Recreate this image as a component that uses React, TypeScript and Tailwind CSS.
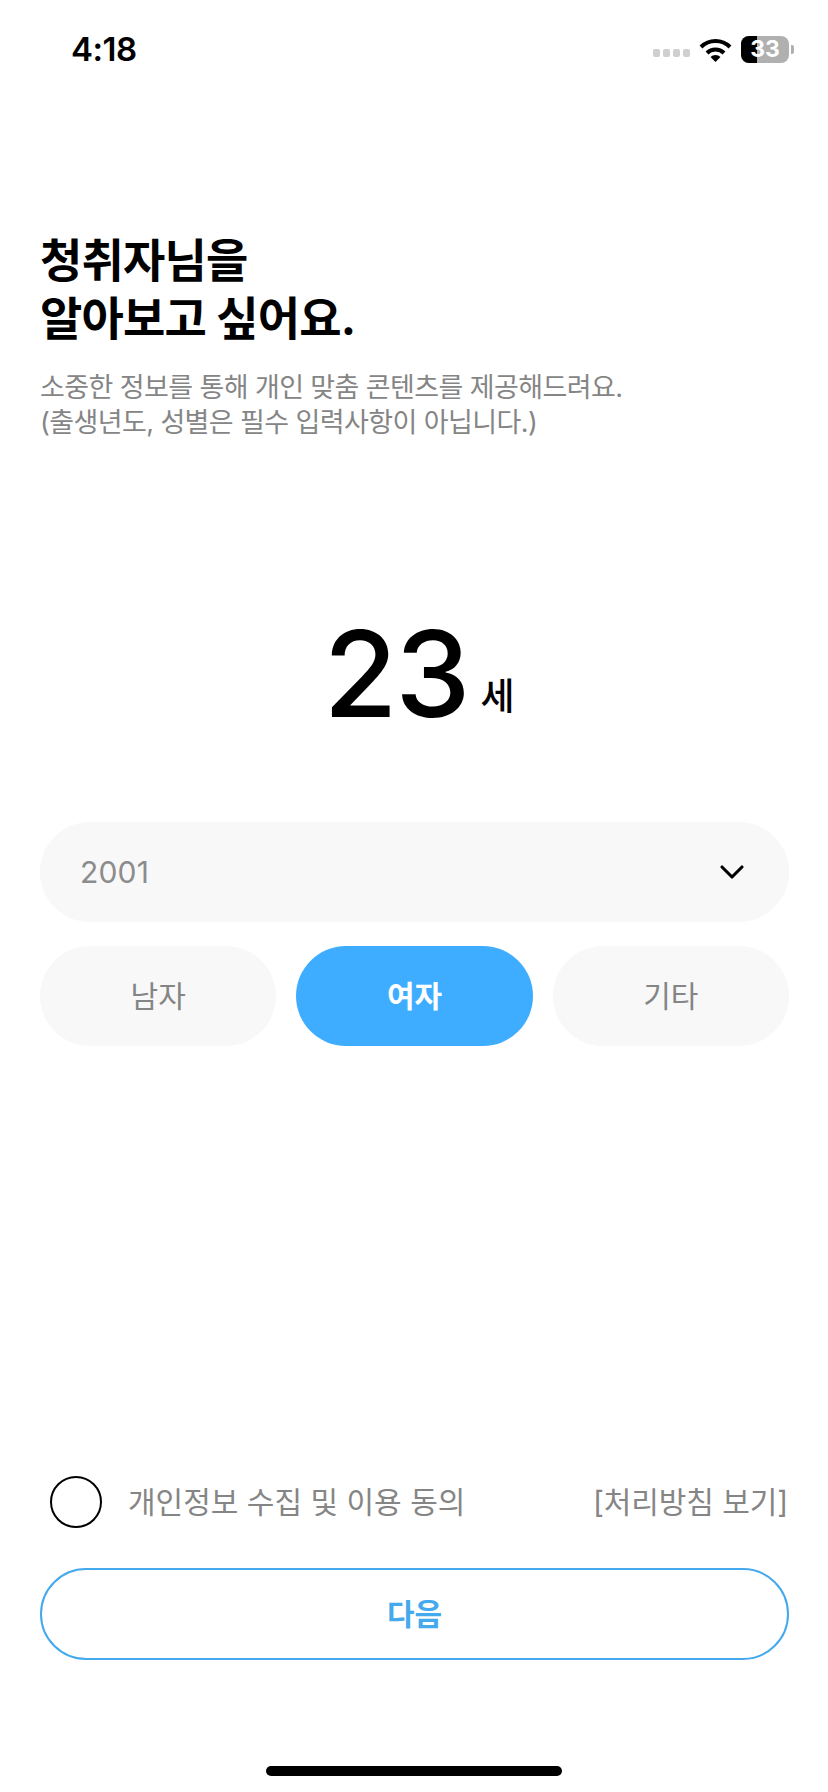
import React from 'react';
import { ChevronDown } from 'lucide-react';

function StatusBar() {
  return (
    <div className="flex h-[86px] shrink-0 items-start justify-between pl-[71px] pr-[34px] pt-[35px]">
      <span className="text-[33px] font-semibold leading-[28px] tracking-[-0.5px] text-black">4:18</span>
      <div className="mt-[1px] flex items-center">
        <div className="mt-[7px] flex gap-[2.5px]">
          {[0, 1, 2, 3].map((i) => (
            <div key={i} className="h-[8px] w-[7.5px] rounded-[2px] bg-[#cfcfcf]" />
          ))}
        </div>
        <svg className="ml-[9px]" width="33" height="24" viewBox="0 0 33 24">
          <path d="M2 9 A20.5 20.5 0 0 1 31 9" fill="none" stroke="#000" strokeWidth="4" />
          <path d="M8 15 A12 12 0 0 1 25 15" fill="none" stroke="#000" strokeWidth="4" />
          <path d="M16.5 24 L11.5 19 A7 7 0 0 1 21.5 19 Z" fill="#000" />
        </svg>
        <div className="relative ml-[9px] flex h-[27px] w-[48px] items-center justify-center overflow-hidden rounded-[8px] bg-[#b0b0b0]">
          <div className="absolute inset-y-0 left-0 w-[16px] bg-black" />
          <span className="relative text-[23px] font-bold leading-none text-white">33</span>
        </div>
        <div className="ml-[2px] h-[9px] w-[3px] rounded-r-[2px] bg-[#b0b0b0]" />
      </div>
    </div>
  );
}

export default function App() {
  const genders = ['남자', '여자', '기타'];

  return (
    <div className="flex h-[1792px] w-[828px] flex-col overflow-hidden bg-white font-['Inter','Noto_Sans_CJK_KR',sans-serif]">
      <StatusBar />

      <div className="flex grow flex-col pl-[40px] pr-[39px]">
        <h1 className="mt-[145px] text-[46px] font-bold leading-[58px] tracking-[-0.8px] text-black">
          청취자님을
          <br />
          알아보고 싶어요.
        </h1>
        <p className="mt-[23px] text-[27px] leading-[35px] tracking-[-0.6px] text-[#858585]">
          소중한 정보를 통해 개인 맞춤 콘텐츠를 제공해드려요.
          <br />
          (출생년도, 성별은 필수 입력사항이 아닙니다.)
        </p>

        <div className="mt-[184px] flex items-baseline justify-center pl-[9px]">
          <span className="text-[120px] font-medium leading-[100px] tracking-[-2px] text-black">23</span>
          <span className="ml-[12px] -translate-y-[7px] text-[37px] font-medium leading-none text-black">세</span>
        </div>

        <div className="mt-[98px] flex h-[100px] items-center justify-between rounded-[50px] bg-[#f8f8f8] pl-[40px] pr-[37px]">
          <span className="text-[30px] leading-none tracking-[0.2px] text-[#8c8c8c]">2001</span>
          <ChevronDown size={40} strokeWidth={1.9} className="text-black" />
        </div>

        <div className="mt-[24px] grid grid-cols-3 gap-[20px]">
          {genders.map((g) => (
            <button
              key={g}
              className={`h-[100px] rounded-[50px] text-[30px] ${g === '여자' ? 'bg-[#3fadff] font-bold text-white' : 'bg-[#f8f8f8] text-[#858585]'}`}
            >
              {g}
            </button>
          ))}
        </div>

        <div className="mt-auto flex items-center pl-[10px] pr-[1px]">
          <div className="h-[52px] w-[52px] rounded-full border-2 border-black" />
          <span className="ml-[26px] text-[30px] leading-none text-[#858585]">개인정보 수집 및 이용 동의</span>
          <span className="ml-auto text-[30px] leading-none tracking-[-0.1px] text-[#858585]">[처리방침 보기]</span>
        </div>

        <button className="mt-[40px] h-[92px] rounded-[46px] border-2 border-[#45a9ee] text-[30px] font-bold text-[#45a9ee]">
          다음
        </button>
      </div>

      <div className="flex h-[132px] shrink-0 items-start justify-center pt-[106px]">
        <div className="h-[10px] w-[296px] rounded-full bg-black" />
      </div>
    </div>
  );
}
